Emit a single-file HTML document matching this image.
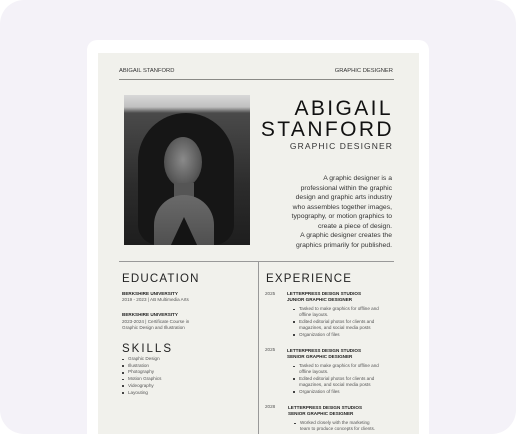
<!DOCTYPE html>
<html><head><style>
*{margin:0;padding:0;box-sizing:border-box}
html,body{width:516px;height:434px;background:#fff;overflow:hidden}
body{font-family:"Liberation Sans",sans-serif;color:#222;position:relative}
.bg{position:absolute;left:0;top:0;width:516px;height:434px;background:#f4f2f8;border-radius:24px;overflow:hidden}
.card{position:absolute;left:87px;top:40px;width:342px;height:394px;background:#fff;border-radius:10px 10px 0 0}
.paper{position:absolute;left:98px;top:53px;width:321px;height:381px;background:#f1f1ec}
.a{position:absolute;white-space:nowrap}
.hl{position:absolute;background:#8a8a86}
.photo{position:absolute;left:124px;top:95px;width:126px;height:150px;overflow:hidden;background:linear-gradient(#d8d8d8 0,#c0c0c0 12px,#4a4a4a 18px,#2c2c2c 60%,#1e1e1e)}
.name{font-size:21px;letter-spacing:2.4px;color:#111;text-align:right;line-height:21px}
.desc{font-size:6.8px;line-height:9.5px;text-align:right;color:#333}
.h2{font-size:11.5px;letter-spacing:1.2px;color:#222}
.b{font-size:4.6px;font-weight:bold;color:#222}
.s{font-size:4.6px;color:#555;line-height:6.4px}
ul{list-style:none}
li{position:relative;padding-left:6px}
li:before{content:"";position:absolute;left:0;top:2.6px;width:1.6px;height:1.6px;background:#444}
</style></head><body>
<div class="bg">
<div class="card"></div>
<div class="paper"></div>
<div class="a" style="left:119px;top:68px;font-size:5.8px;color:#333">ABIGAIL STANFORD</div>
<div class="a" style="right:123px;top:68px;font-size:5.8px;color:#333">GRAPHIC DESIGNER</div>
<div class="hl" style="left:119px;top:79px;width:275px;height:1.2px"></div>
<div class="photo">
 <div style="position:absolute;left:14px;top:18px;width:96px;height:132px;border-radius:48px 48px 20px 20px;background:#161616"></div>
 <div style="position:absolute;left:40px;top:42px;width:38px;height:50px;border-radius:50%;background:radial-gradient(ellipse at 50% 45%,#8a8a8a,#5a5a5a 60%,#333)"></div>
 <div style="position:absolute;left:50px;top:88px;width:20px;height:20px;background:#555"></div>
 <div style="position:absolute;left:30px;top:100px;width:60px;height:50px;border-radius:30px 30px 0 0;background:linear-gradient(#6a6a6a,#505050)"></div>
 <div style="position:absolute;left:46px;top:122px;width:28px;height:30px;background:#141414;clip-path:polygon(0 100%,50% 0,100% 100%)"></div>
</div>
<div class="a name" style="right:123px;top:98px">ABIGAIL</div>
<div class="a name" style="right:122px;top:119px">STANFORD</div>
<div class="a" style="right:123px;top:141px;font-size:8.5px;letter-spacing:1.1px;color:#333">GRAPHIC DESIGNER</div>
<div class="a desc" style="right:124px;top:174px">A graphic designer is a<br>professional within the graphic<br>design and graphic arts industry<br>who assembles together images,<br>typography, or motion graphics to<br>create a piece of design.<br>A graphic designer creates the<br>graphics primarily for published.</div>
<div class="hl" style="left:119px;top:261px;width:275px;height:1px;background:#999"></div>
<div class="hl" style="left:258px;top:261px;width:1px;height:173px;background:#999"></div>
<div class="a h2" style="left:122px;top:273px">EDUCATION</div>
<div class="a b" style="left:122px;top:291px">BERKSHIRE UNIVERSITY</div>
<div class="a s" style="left:122px;top:297px">2019 - 2023 | AB Multimedia Arts</div>
<div class="a b" style="left:122px;top:312px">BERKSHIRE UNIVERSITY</div>
<div class="a s" style="left:122px;top:319px">2023-2024 | Certificate Course in<br>Graphic Design and Illustration</div>
<div class="a h2" style="left:122px;top:343px;letter-spacing:2px">SKILLS</div>
<ul class="a s" style="left:122px;top:356px;line-height:6.7px"><li>Graphic Design</li><li>Illustration</li><li>Photography</li><li>Motion Graphics</li><li>Videography</li><li>Layouting</li></ul>
<div class="a h2" style="left:266px;top:273px">EXPERIENCE</div>
<div class="a s" style="left:265px;top:291px">2025</div>
<div class="a b" style="left:287px;top:291px;line-height:6px">LETTERPRESS DESIGN STUDIOS<br>JUNIOR GRAPHIC DESIGNER</div>
<ul class="a s" style="left:293px;top:306px"><li>Tasked to make graphics for offline and<br>offline layouts.</li><li>Edited editorial photos for clients and<br>magazines, and social media posts</li><li>Organization of files</li></ul>
<div class="a s" style="left:265px;top:347px">2025</div>
<div class="a b" style="left:287px;top:348px;line-height:6px">LETTERPRESS DESIGN STUDIOS<br>SENIOR GRAPHIC DESIGNER</div>
<ul class="a s" style="left:293px;top:363px"><li>Tasked to make graphics for offline and<br>offline layouts.</li><li>Edited editorial photos for clients and<br>magazines, and social media posts</li><li>Organization of files</li></ul>
<div class="a s" style="left:265px;top:404px">2028</div>
<div class="a b" style="left:288px;top:405px;line-height:6px">LETTERPRESS DESIGN STUDIOS<br>SENIOR GRAPHIC DESIGNER</div>
<ul class="a s" style="left:294px;top:420px"><li>Worked closely with the marketing<br>team to produce concepts for clients.</li></ul>
</div>
</body></html>
